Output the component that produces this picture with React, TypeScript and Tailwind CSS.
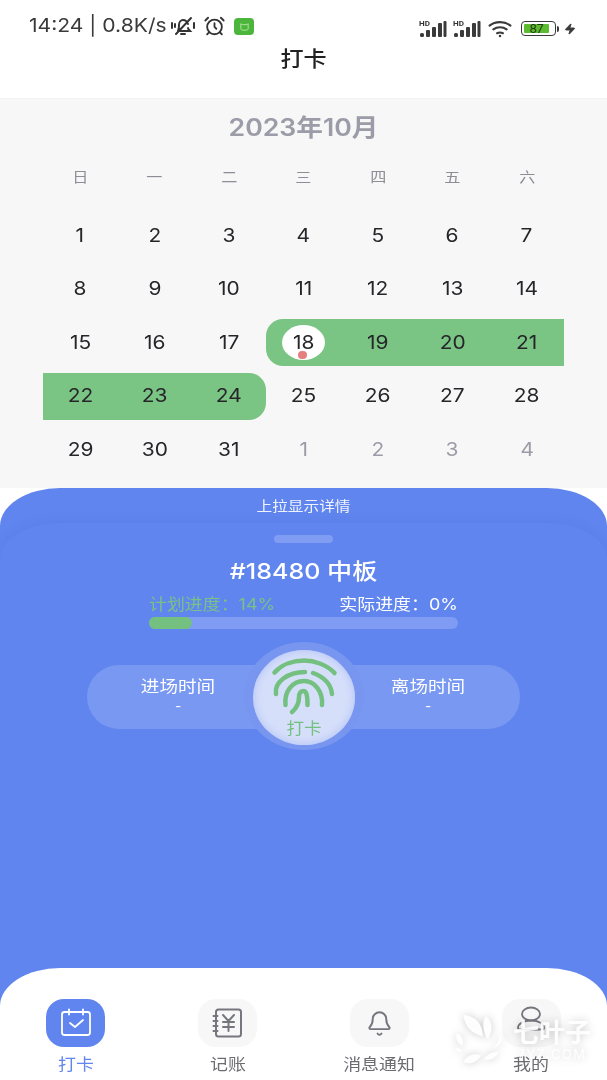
import { AlarmClock, Bell, Zap } from 'lucide-react';

const CJK = "font-['Roboto','Noto_Sans_CJK_SC',sans-serif]";

const weekdays = ['日', '一', '二', '三', '四', '五', '六'];

const rows = [
  ['1', '2', '3', '4', '5', '6', '7'],
  ['8', '9', '10', '11', '12', '13', '14'],
  ['15', '16', '17', '18', '19', '20', '21'],
  ['22', '23', '24', '25', '26', '27', '28'],
  ['29', '30', '31', '1', '2', '3', '4'],
];

function Signal() {
  return (
    <div className="relative w-[28px] h-[17px]">
      <span className="absolute left-0 top-0 text-[7px] leading-[8px] font-bold text-[#333] scale-x-[1.15] origin-left">HD</span>
      <svg viewBox="0 0 28 17" className="absolute inset-0 w-[28px] h-[17px]" fill="#3a3a3a">
        <rect x="1" y="13" width="4" height="4" rx="1.500" />
        <rect x="7" y="10" width="4" height="7" rx="1" />
        <rect x="13" y="7" width="4" height="10" rx="1" />
        <rect x="19" y="3" width="4" height="14" rx="1" />
        <rect x="24.500" y="1" width="3" height="16" rx="1" />
      </svg>
    </div>
  );
}

function StatusBar() {
  return (
    <div className="h-[40px] flex items-end justify-between pl-[29px] pr-[31px] pb-[2px]">
      <div className="flex items-center">
        <span className="inline-block w-[138px] text-[19px] leading-[24px] text-[#3a3a3a] font-['Inter',sans-serif] whitespace-nowrap scale-x-[1.11] origin-left">14:24 | 0.8K/s</span>
        <svg viewBox="0 0 26 20" className="w-[26px] h-[20px] ml-[3px]" fill="none" stroke="#333" strokeWidth="2" strokeLinecap="round">
          <path d="M8 15c1-2 1-4 1-6 0-3 2-5 4-5s4 1 5 4M18 12c0 1 1 2 2 3H8M11 18h4M6 18 21 2M2 7v5M5 8v3M24 7v5" />
        </svg>
        <AlarmClock className="w-[23px] h-[22px] ml-[7px] text-[#333]" strokeWidth={2} />
        <div className="w-[20px] h-[17px] ml-[8px] rounded-[4px] bg-[#4cb63c] flex items-center justify-center">
          <svg viewBox="0 0 12 12" className="w-[11px] h-[11px]" fill="none" stroke="#b9e6a8" strokeWidth="1">
            <path d="M2 3l1.500 1h5L10 3v5.500a2 2 0 0 1-2 1.500H4a2 2 0 0 1-2-1.500z" />
          </svg>
        </div>
      </div>
      <div className="flex items-center">
        <Signal />
        <div className="ml-[6px]"><Signal /></div>
        <svg viewBox="0 0 26 20" className="w-[26px] h-[19px] ml-[6px]" fill="none" stroke="#3a3a3a" strokeWidth="2.200" strokeLinecap="round">
          <path d="M2 7c6-5 16-5 22 0M6 11c4-3 10-3 14 0M10 15c2-1 4-1 6 0" />
          <circle cx="13" cy="18" r="1.300" fill="#3a3a3a" stroke="none" />
        </svg>
        <div className="ml-[8px] w-[35px] h-[15px] rounded-[4px] border-[1.5px] border-[#3a3a3a] p-[2px] flex">
          <div className="w-[25px] h-full rounded-[1px] bg-[#5dbb2f] flex items-center justify-center text-[12px] leading-none text-[#1d3a10] font-['Inter',sans-serif]">87</div>
        </div>
        <div className="w-[2px] h-[6px] ml-[1px] bg-[#3a3a3a] rounded-r-sm" />
        <Zap className="w-[12px] h-[14px] ml-[5px] text-[#3a3a3a] fill-[#3a3a3a]" />
      </div>
    </div>
  );
}

function Calendar() {
  return (
    <div className="h-[390px] bg-[#f7f7f7] border-t border-[#f2f2f2] shrink-0">
      <div className="pt-[14px] h-[44px] text-center text-[24px] leading-[30px] font-semibold text-[#9c9ca8] font-['Inter','Noto_Sans_CJK_SC',sans-serif] scale-x-[1.11]">2023年10月</div>
      <div className="mx-[43px] grid grid-cols-7 mt-[19px] h-[28px] items-center text-center text-[14px] text-[#8d8d96] font-['Noto_Sans_CJK_SC',sans-serif]">
        {weekdays.map((w) => (
          <div key={w} className="scale-x-[1.15]">{w}</div>
        ))}
      </div>
      <div className="mx-[43px] mt-[19px] flex flex-col">
        {rows.map((row, r) => (
          <div key={r} className="grid grid-cols-7 h-[53.5px] items-center">
            {row.map((d, i) => {
              const inRange = (r === 2 && i >= 3) || (r === 3 && i <= 2);
              const start = r === 2 && i === 3;
              const end = r === 3 && i === 2;
              const muted = r === 4 && i >= 3;
              return (
                <div
                  key={i}
                  className={`h-[47px] flex items-center justify-center text-[19px] font-['Inter',sans-serif] ${
                    inRange ? 'bg-[#7ac484]' : ''
                  } ${start ? 'rounded-l-[17px]' : ''} ${end ? 'rounded-r-[17px]' : ''} ${
                    muted ? 'text-[#9c9ca8]' : 'text-[#26262a]'
                  }`}
                >
                  {r === 2 && i === 3 ? (
                    <div className="relative w-[43px] h-[35px] rounded-[50%] bg-white flex items-center justify-center">
                      <span className="inline-block scale-x-[1.1]">{d}</span>
                      <span className="absolute left-[16px] bottom-[1px] w-[9px] h-[8px] rounded-full bg-[#e57f7f]" />
                    </div>
                  ) : (
                    <span className="inline-block scale-x-[1.1]">{d}</span>
                  )}
                </div>
              );
            })}
          </div>
        ))}
      </div>
    </div>
  );
}

function Fingerprint() {
  return (
    <svg viewBox="270 655 70 62" className="w-[70px] h-[62px] shrink-0" fill="none" stroke="#74c080" strokeWidth="4.500" strokeLinecap="round">
      <path d="M275.500 672.500C283 664 295 660.500 305 660.500C316 660.500 328 665 335.500 673" />
      <path d="M277 694C275 682 289 672 306 672" />
      <path d="M314 673C325 677 332 684 333 694" />
      <path d="M286.500 705C285 692 293 681 305 681C316 681 324 692 323 705" />
      <path d="M293 712C299 707 300 702 300 697C300 693 302 691 304.500 691C307 691 308.500 694 308.500 705" />
    </svg>
  );
}

function ClockPanel() {
  return (
    <div className="relative mx-[87px] mt-[36px] h-[64px] rounded-[32px] bg-[#7898f2] flex justify-between text-white text-[16px] font-['Noto_Sans_CJK_SC',sans-serif]">
      <div className="w-[182px] pt-[10px] text-center leading-[20px]">
        <div className="scale-x-[1.16]">进场时间</div>
        <div className="leading-[18px]">-</div>
      </div>
      <div className="w-[184px] pt-[10px] text-center leading-[20px]">
        <div className="scale-x-[1.16]">离场时间</div>
        <div className="leading-[18px]">-</div>
      </div>
      {/* round button sits over the pill */}
      <div className="absolute left-[157px] top-[-23px] w-[120px] h-[108px] pt-[2px] rounded-[50%] bg-[#7896f0] flex items-center justify-center">
        <div className="w-[102px] h-[95px] rounded-[50%] bg-[#d6dffa] shadow-[inset_0_0_10px_#aebff5] flex flex-col items-center pt-[5px]">
          <Fingerprint />
          <span className="inline-block text-[16px] leading-[20px] text-[#74c080] scale-x-[1.1]">打卡</span>
        </div>
      </div>
    </div>
  );
}

function Sheet() {
  return (
    <div className="flex-1 bg-[#6085ee] rounded-t-[60px_38px] pt-[35px] -mb-[40px]">
      <div className="h-[0px] -mt-[35px]">
        <div className="pt-[8px] text-center text-[14px] leading-[18px] text-white/90 font-['Noto_Sans_CJK_SC',sans-serif] scale-x-[1.12]">上拉显示详情</div>
      </div>
      <div className="mt-[35px] h-full rounded-t-[60px_36px] bg-[#6085ee] shadow-[0_-3px_8px_rgba(70,100,200,0.14)] pt-[12px]">
        <div className="mx-auto w-[59px] h-[8px] rounded-full bg-[#809cf3]" />
        <div className="mt-[14px] text-center text-[22px] leading-[28px] font-medium text-white font-['Inter','Noto_Sans_CJK_SC',sans-serif] scale-x-[1.14]">#18480 中板</div>
        <div className="mx-[149px] mt-[9px] flex justify-between text-[16px] leading-[20px] font-['Inter','Noto_Sans_CJK_SC',sans-serif]">
          <span className="inline-block text-[#78c188] whitespace-nowrap scale-x-[1.12] origin-left">计划进度：14%</span>
          <span className="inline-block text-white whitespace-nowrap scale-x-[1.12] origin-right">实际进度：0%</span>
        </div>
        <div className="mx-[149px] mt-[3px] h-[12px] rounded-full bg-[#7f9bf3]">
          <div className="h-full w-[14%] rounded-full bg-[#74c080]" />
        </div>
        <ClockPanel />
      </div>
    </div>
  );
}

function CalendarCheck() {
  return (
    <svg viewBox="0 0 32 32" className="w-[32px] h-[32px]" fill="none" stroke="#fff" strokeWidth="1.800" strokeLinecap="round" strokeLinejoin="round">
      <rect x="2" y="5" width="28" height="23" rx="2.500" />
      <path d="M9 2.500v5M23 2.500v5M10 16l5 4 8-7" />
    </svg>
  );
}

function Ledger() {
  return (
    <svg viewBox="0 0 32 32" className="w-[32px] h-[32px]" fill="none" stroke="#76767f" strokeWidth="2" strokeLinecap="round" strokeLinejoin="round">
      <rect x="4" y="2.500" width="25" height="27" rx="2.500" />
      <path d="M1.500 9h4M1.500 14h4M1.500 19h4M1.500 24h4M11 8l5.500 6 5.500-6M11 15h11M11 20h11M16.500 14v10" />
    </svg>
  );
}

function Person() {
  return (
    <svg viewBox="0 0 32 26" className="w-[32px] h-[26px] -mt-[8px]" fill="none" stroke="#76767f" strokeWidth="1.800" strokeLinecap="round" strokeLinejoin="round">
      <ellipse cx="16" cy="8" rx="9" ry="6.500" />
      <path d="M3 22c0-4 5-7.500 13-7.500s13 3.500 13 7.500c0 1-1 1.500-2 1.500H5c-1 0-2-.5-2-1.500z" />
    </svg>
  );
}

function BottomNav() {
  const tabs = [
    { label: '打卡', active: true, icon: <CalendarCheck /> },
    { label: '记账', active: false, icon: <Ledger /> },
    { label: '消息通知', active: false, icon: <Bell className="w-[27px] h-[27px] text-[#76767f]" strokeWidth={1.700} /> },
    { label: '我的', active: false, icon: <Person /> },
  ];
  return (
    <div className="relative h-[112px] shrink-0 bg-white rounded-t-[60px_38px] pt-[31px]">
      <div className="grid grid-cols-4 w-[607px]">
        {tabs.map((t) => (
          <div key={t.label} className="flex flex-col items-center">
            <div className={`w-[59px] h-[48px] rounded-[18px] flex items-center justify-center ${t.active ? 'bg-[#6085ee]' : 'bg-[#f7f7f7]'}`}>
              {t.icon}
            </div>
            <span className={`inline-block mt-[6px] text-[16px] leading-[21px] scale-x-[1.12] font-['Noto_Sans_CJK_SC',sans-serif] ${t.active ? 'text-[#6085ee]' : 'text-[#6c6c72]'}`}>
              {t.label}
            </span>
          </div>
        ))}
      </div>
      {/* site watermark over the tab bar */}
      <div className="absolute left-[454px] top-[46px] flex items-start drop-shadow-[0_0_4px_rgba(0,0,0,0.22)]">
        <svg viewBox="0 0 52 54" className="w-[50px] h-[52px]" fill="#fff" fillOpacity="0.95">
          <path d="M10 1c12 1 20 9 20 22-10-2-19-9-20-22zM33 2c7 5 8 15 2 24-5-8-6-17-2-24zM3 20c5 2 7 7 6 13-5-2-8-7-6-13zM2 36c3-1 5 0 6 3-3 1-5 0-6-3zM10 50c3-7 10-10 18-7-4 7-11 10-18 7zM31 47c3-5 9-8 15-7-3 6-9 9-15 7zM40 36c5-4 8-9 8-16 3 7 1 13-8 16z" />
        </svg>
        <div className="ml-[9px] mt-[3px] w-[78px] text-white/90 text-center">
          <div className="text-[26px] leading-[28px] font-bold font-['Noto_Sans_CJK_SC',sans-serif] whitespace-nowrap">七叶子</div>
          <div className="text-[13px] leading-[16px] mt-[1px] tracking-[1.5px] font-['Inter',sans-serif] whitespace-nowrap">7YZ.COM</div>
        </div>
      </div>
    </div>
  );
}

export default function App() {
  return (
    <div className={`w-[607px] h-[1080px] overflow-hidden bg-white flex flex-col ${CJK}`}>
      <div className="h-[98px] shrink-0">
        <StatusBar />
        <div className="text-center mt-[3px] text-[21px] leading-[28px] font-medium text-[#222] font-['Noto_Sans_CJK_SC',sans-serif] scale-x-[1.1]">打卡</div>
      </div>
      <Calendar />
      <Sheet />
      <BottomNav />
    </div>
  );
}
